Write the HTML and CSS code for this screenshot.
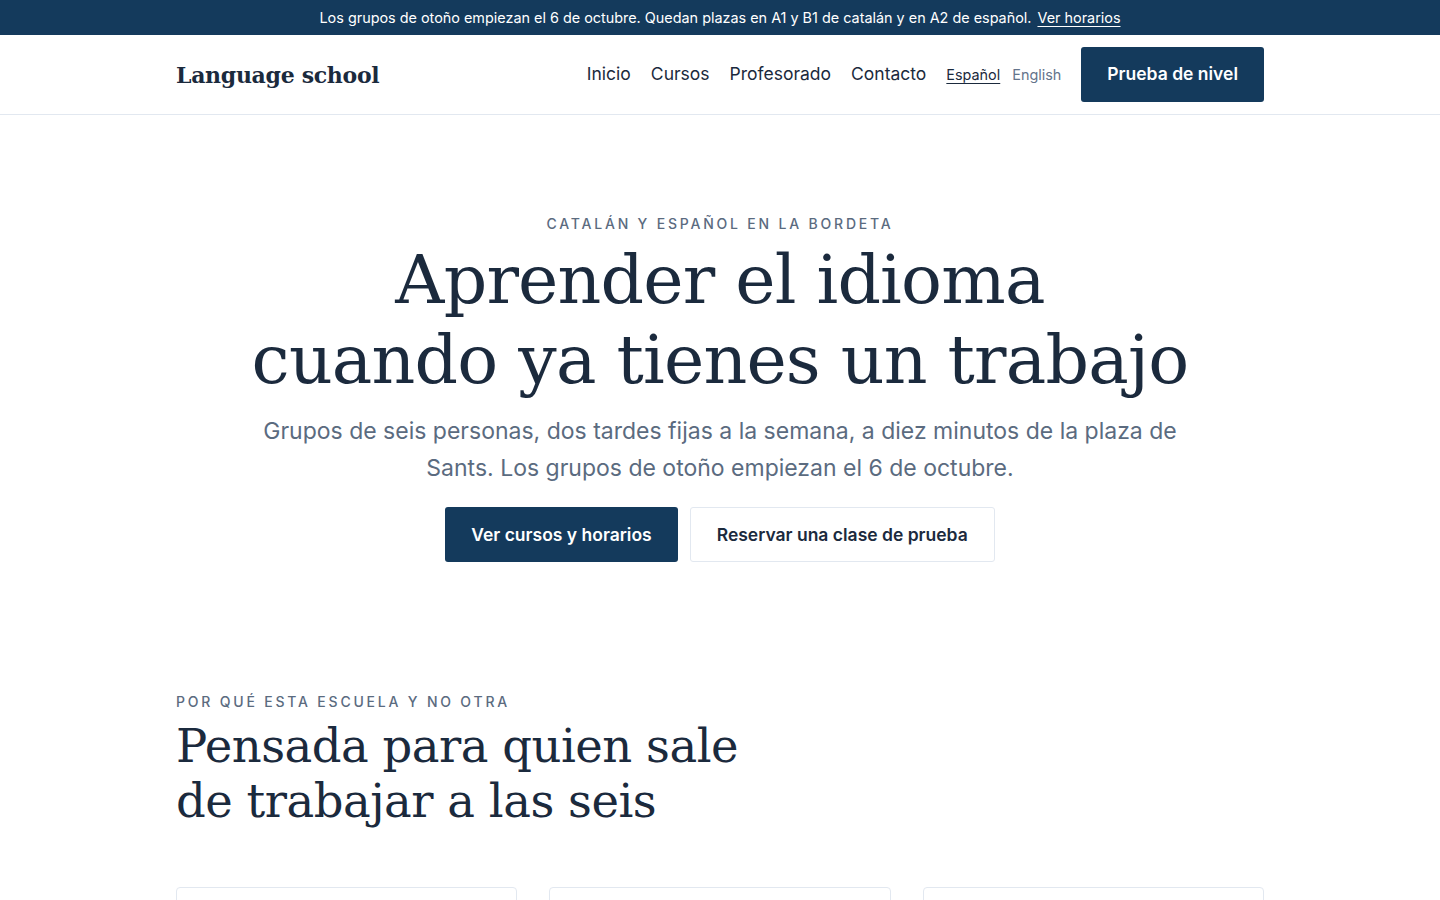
FILE: index.html
```html
<!DOCTYPE html>
<html lang="es">
<head>
<meta charset="utf-8">
<title>Language school</title>
<link rel="stylesheet" href="styles.css">
</head>
<body>
<div class="topbar">
  <span>Los grupos de otoño empiezan el 6 de octubre. Quedan plazas en A1 y B1 de catalán y en A2 de español.</span>
  <a href="#">Ver horarios</a>
</div>
<header class="header">
  <div class="container header-inner">
    <a class="logo" href="#">Language school</a>
    <nav class="nav">
      <a class="nav-link" href="#">Inicio</a>
      <a class="nav-link" href="#">Cursos</a>
      <a class="nav-link" href="#">Profesorado</a>
      <a class="nav-link" href="#">Contacto</a>
      <div class="langs">
        <a class="lang active" href="#">Español</a>
        <a class="lang" href="#">English</a>
      </div>
      <a class="btn btn-primary" href="#">Prueba de nivel</a>
    </nav>
  </div>
</header>
<main>
  <section class="hero">
    <p class="eyebrow">Catalán y español en la Bordeta</p>
    <h1>Aprender el idioma<br>cuando ya tienes un trabajo</h1>
    <p class="lead">Grupos de seis personas, dos tardes fijas a la semana, a diez minutos de la plaza de Sants. Los grupos de otoño empiezan el 6 de octubre.</p>
    <div class="actions">
      <a class="btn btn-primary" href="#">Ver cursos y horarios</a>
      <a class="btn btn-secondary" href="#">Reservar una clase de prueba</a>
    </div>
  </section>
  <section class="container why">
    <p class="eyebrow left">Por qué esta escuela y no otra</p>
    <h2>Pensada para quien sale<br>de trabajar a las seis</h2>
    <div class="cards">
      <div class="card"></div>
      <div class="card"></div>
      <div class="card"></div>
    </div>
  </section>
</main>
</body>
</html>
```

FILE: styles.css
```css
* { box-sizing: border-box; }
html, body { margin: 0; padding: 0; }
body {
  font-family: Inter, "Noto Sans", sans-serif;
  color: #1b2a3d;
  background: #fff;
}
a { color: inherit; text-decoration: none; }
.container { width: 1088px; margin: 0 auto; }

.topbar {
  background: #143a5c;
  color: #fff;
  height: 35px;
  display: flex;
  align-items: center;
  justify-content: center;
  gap: 6px;
  font-size: 14.4px;
}
.topbar a { text-decoration: underline; text-underline-offset: 3px; }

.header { border-bottom: 1px solid #e2e8f0; }
.header-inner {
  height: 79px;
  display: flex;
  align-items: center;
  justify-content: space-between;
}
.logo {
  font-family: "DejaVu Serif", "Liberation Serif", serif;
  font-weight: bold;
  font-size: 22px;
  color: #1b2a3d;
  letter-spacing: -0.3px;
}
.nav { display: flex; align-items: center; }
.nav-link { font-size: 17.5px; color: #1b2a3d; margin-right: 20px; margin-bottom: 2px; }
.langs { display: flex; gap: 12px; margin-right: 20px; }
.lang { font-size: 14.4px; color: #64748b; }
.lang.active { color: #1b2a3d; text-decoration: underline; text-underline-offset: 3px; }

.btn {
  display: inline-flex;
  align-items: center;
  justify-content: center;
  height: 55px;
  padding: 0 26px;
  border-radius: 3px;
  font-size: 17.5px;
  font-weight: 600;
}
.nav .btn { padding-bottom: 2px; }
.btn-primary { background: #143a5c; color: #fff; }
.btn-secondary { background: #fff; color: #1b2a3d; border: 1px solid #e2e8f0; }

.hero {
  text-align: center;
  padding-top: 99px;
  padding-bottom: 104px;
}
.eyebrow {
  margin: 0;
  font-size: 14px;
  letter-spacing: 2.8px;
  text-transform: uppercase;
  color: #5b6b7f;
  font-weight: 500;
  line-height: 20px;
}
.hero h1 {
  margin: 6px 0 0;
  font-family: "DejaVu Serif", "Liberation Serif", serif;
  font-weight: normal;
  font-size: 68px;
  line-height: 80px;
  color: #1b2a3d;
  letter-spacing: -0.8px;
}
.lead {
  margin: 13px auto 0;
  max-width: 960px;
  font-size: 23px;
  line-height: 37px;
  color: #5b6b7f;
}
.actions {
  margin-top: 20px;
  display: flex;
  justify-content: center;
  gap: 12px;
}

.why { padding-top: 26px; }
.why h2 {
  margin: 7px 0 0;
  font-family: "DejaVu Serif", "Liberation Serif", serif;
  font-weight: normal;
  font-size: 46.5px;
  line-height: 55px;
  color: #1b2a3d;
  letter-spacing: -0.5px;
}
.cards {
  margin-top: 58px;
  display: grid;
  grid-template-columns: repeat(3, 1fr);
  gap: 32px;
}
.card {
  height: 200px;
  border: 1px solid #e2e8f0;
  border-radius: 4px;
}
```
